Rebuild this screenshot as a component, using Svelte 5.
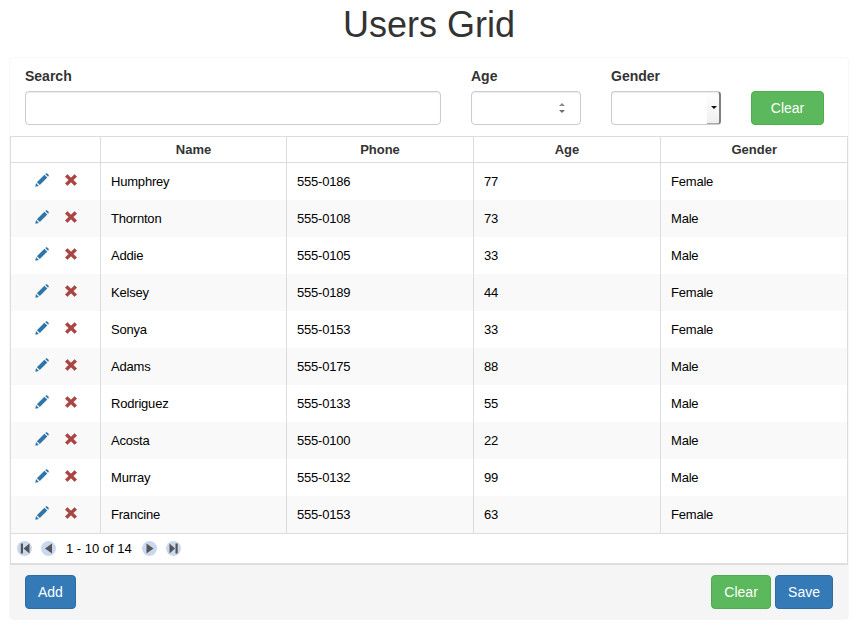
<script>
  const rows = [
    { name: "Humphrey", phone: "555-0186", age: 77, gender: "Female" },
    { name: "Thornton", phone: "555-0108", age: 73, gender: "Male" },
    { name: "Addie", phone: "555-0105", age: 33, gender: "Male" },
    { name: "Kelsey", phone: "555-0189", age: 44, gender: "Female" },
    { name: "Sonya", phone: "555-0153", age: 33, gender: "Female" },
    { name: "Adams", phone: "555-0175", age: 88, gender: "Male" },
    { name: "Rodriguez", phone: "555-0133", age: 55, gender: "Male" },
    { name: "Acosta", phone: "555-0100", age: 22, gender: "Male" },
    { name: "Murray", phone: "555-0132", age: 99, gender: "Male" },
    { name: "Francine", phone: "555-0153", age: 63, gender: "Female" }
  ];
</script>

<div class="page">
  <h1>Users Grid</h1>

  <div class="panel">
    <form class="filters" onsubmit={e => e.preventDefault()}>
      <label class="field search">
        <span>Search</span>
        <input type="text" />
      </label>
      <label class="field age">
        <span>Age</span>
        <div class="number">
          <input type="text" />
          <svg class="spin" width="8" height="14" viewBox="0 0 8 14">
            <path d="M4 2 L7 5 H1 Z" fill="#8a8a8a" />
            <path d="M1 9 H7 L4 12 Z" fill="#6e6e6e" />
          </svg>
        </div>
      </label>
      <label class="field gender">
        <span>Gender</span>
        <div class="select">
          <select>
            <option></option>
            <option>Male</option>
            <option>Female</option>
          </select>
          <i class="select-arrow"></i>
        </div>
      </label>
      <button type="button" class="btn green filter-clear">Clear</button>
    </form>

    <div class="grid">
      <table>
        <colgroup>
          <col style="width: 89px" />
          <col style="width: 186px" />
          <col style="width: 187px" />
          <col style="width: 187px" />
          <col />
        </colgroup>
        <thead>
          <tr>
            <th></th>
            <th>Name</th>
            <th>Phone</th>
            <th>Age</th>
            <th>Gender</th>
          </tr>
        </thead>
        <tbody>
          {#each rows as row}
            <tr>
              <td class="actions">
                <svg class="edit" width="14" height="14" viewBox="0 0 14 14">
                  <path d="M0.3 13.7 L1 10.1 L3.9 13 Z" fill="#2f75a8" />
                  <path d="M1.9 9.2 L9.4 1.7 L12.3 4.6 L4.8 12.1 Z" fill="#2f75a8" />
                  <path d="M10.2 0.9 L11.2 0.3 Q11.7 0 12.2 0.4 L13.6 1.8 Q14 2.3 13.7 2.8 L13.1 3.8 Z" fill="#2f75a8" />
                </svg>
                <svg class="remove" width="14" height="14" viewBox="0 0 14 14">
                  <path d="M3.4 1.6 L7 5 L10.6 1.6 L12.7 3.7 L9.2 7 L12.7 10.4 L10.6 12.5 L7 9.1 L3.4 12.5 L1.3 10.4 L4.8 7 L1.3 3.7 Z" fill="#a94442" stroke="#a94442" stroke-width="0.6" stroke-linejoin="round" />
                </svg>
              </td>
              <td>{row.name}</td>
              <td>{row.phone}</td>
              <td>{row.age}</td>
              <td>{row.gender}</td>
            </tr>
          {/each}
        </tbody>
      </table>
      <div class="pager">
        <span class="page-btn">
          <svg width="15" height="15" viewBox="0 0 15 15"><path d="M3.8 2.5 H6 V12.5 H3.8 Z M12.5 2.5 V12.5 L6.5 7.5 Z" fill="#555" /></svg>
        </span>
        <span class="page-btn">
          <svg width="15" height="15" viewBox="0 0 15 15"><path d="M11 2.5 V12.5 L4 7.5 Z" fill="#555" /></svg>
        </span>
        <span class="page-info">1 - 10 of 14</span>
        <span class="page-btn">
          <svg width="15" height="15" viewBox="0 0 15 15"><path d="M4.5 2.5 V12.5 L11.5 7.5 Z" fill="#555" /></svg>
        </span>
        <span class="page-btn">
          <svg width="15" height="15" viewBox="0 0 15 15"><path d="M3.5 2.5 V12.5 L9 7.5 Z M9.5 2.5 H11.7 V12.5 H9.5 Z" fill="#555" /></svg>
        </span>
      </div>
    </div>

    <div class="footer">
      <button type="button" class="btn blue">Add</button>
      <div class="footer-right">
        <button type="button" class="btn green footer-clear">Clear</button>
        <button type="button" class="btn blue">Save</button>
      </div>
    </div>
  </div>
</div>

<style>
  :global(body) {
    font-family: "Liberation Sans", Arial, sans-serif;
    font-size: 13px;
    color: #333;
    background: #fff;
  }

  .page {
    padding: 0 9px;
  }

  h1 {
    margin: 0;
    padding: 5px 0 12px;
    font-size: 36px;
    font-weight: 500;
    line-height: 40px;
    text-align: center;
    color: #333;
  }

  .panel {
    border: 1px solid #f7f7f7;
    border-radius: 4px;
  }

  .filters {
    display: flex;
    align-items: flex-end;
    padding: 8px 15px 11px 15px;
  }

  .field {
    display: flex;
    flex-direction: column;
  }
  .field span {
    font-size: 14px;
    font-weight: 700;
    line-height: 20px;
    margin-bottom: 5px;
  }
  .search {
    width: 416px;
    margin-right: 30px;
  }
  .age {
    width: 110px;
    margin-right: 30px;
  }
  .gender {
    width: 110px;
    margin-right: 30px;
  }

  input {
    box-sizing: border-box;
    width: 100%;
    height: 34px;
    padding: 6px 12px;
    border: 1px solid #ccc;
    border-radius: 4px;
    background: #fff;
    box-shadow: inset 0 1px 1px rgba(0, 0, 0, 0.075);
    font: inherit;
    outline: none;
  }

  .number,
  .select {
    position: relative;
    height: 34px;
  }
  .spin {
    position: absolute;
    right: 15px;
    top: 10px;
  }

  select {
    appearance: none;
    box-sizing: border-box;
    display: block;
    width: 100%;
    height: 34px;
    border: 1px solid #ccc;
    border-right: 2px solid #808080;
    border-radius: 4px;
    background:
      linear-gradient(#a8a8a8, #a8a8a8) right bottom / 12px 1px no-repeat,
      linear-gradient(to bottom, #fff, #efefef) right top / 12px 100% no-repeat,
      #fff;
    box-shadow: inset 0 1px 1px rgba(0, 0, 0, 0.075);
    font: inherit;
  }
  .select-arrow {
    position: absolute;
    right: 4px;
    top: 15px;
    width: 0;
    height: 0;
    border-left: 3px solid transparent;
    border-right: 3px solid transparent;
    border-top: 3px solid #111;
  }

  .btn {
    box-sizing: border-box;
    height: 34px;
    padding: 6px 12px;
    border: 1px solid transparent;
    border-radius: 4px;
    color: #fff;
    font-family: inherit;
    font-size: 14px;
    line-height: 20px;
  }
  .green {
    background: #5cb85c;
    border-color: #4cae4c;
  }
  .blue {
    background: #337ab7;
    border-color: #2e6da4;
  }
  .filter-clear {
    width: 73px;
  }
  .footer-clear {
    width: 60px;
    padding: 6px 0;
  }

  .grid {
    width: 838px;
    box-sizing: border-box;
    border: 1px solid #ddd;
    border-bottom-width: 2px;
  }

  table {
    width: 100%;
    table-layout: fixed;
    border-collapse: collapse;
  }
  th {
    height: 25px;
    padding: 0 10px 0 11px;
    border-left: 1px solid #ddd;
    border-bottom: 1px solid #ddd;
    font-size: 13px;
    font-weight: 700;
    text-align: center;
    color: #333;
  }
  td {
    height: 37px;
    padding: 0 9px 0 10.5px;
    border-left: 1px solid #ddd;
    font-size: 13px;
    letter-spacing: -0.2px;
    color: #000;
  }
  th:first-child,
  td:first-child {
    border-left: 0;
  }
  tbody tr:nth-child(even) {
    background: #f9f9f9;
  }
  tbody tr:last-child td {
    border-bottom: 1px solid #ddd;
  }

  .actions {
    padding: 0;
    line-height: 0;
    letter-spacing: normal;
  }
  .actions svg {
    position: relative;
    top: -1.5px;
  }
  .edit {
    margin-left: 24px;
  }
  .remove {
    margin-left: 11px;
  }

  .pager {
    display: flex;
    align-items: center;
    height: 29px;
    padding-left: 6px;
    color: #000;
    font-size: 13px;
  }
  .page-btn {
    display: block;
    width: 15px;
    height: 15px;
    margin-right: 9px;
    border-radius: 50%;
    background: #c9d8ef;
  }
  .page-btn svg {
    display: block;
  }
  .page-info {
    margin: 0 10px 0 1px;
  }

  .footer {
    display: flex;
    justify-content: space-between;
    padding: 10px 15px 10px;
    background: #f5f5f5;
  }
  .footer-right {
    display: flex;
    gap: 4px;
  }
</style>
